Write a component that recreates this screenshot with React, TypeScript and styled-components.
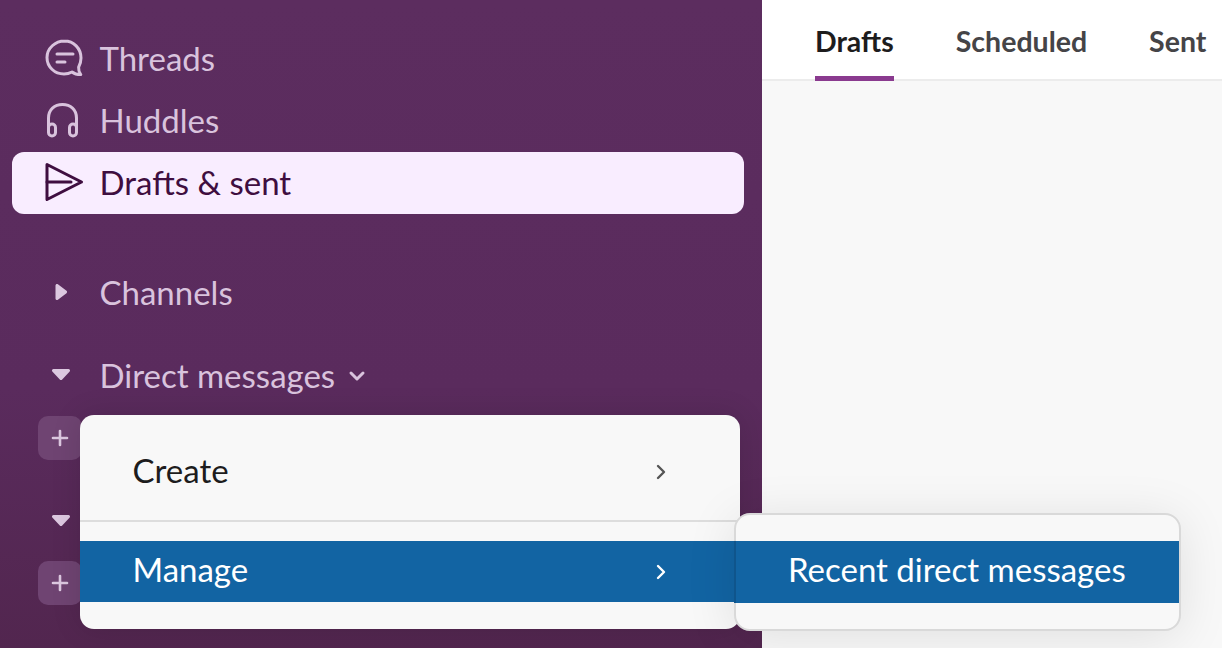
import React from "react";
import styled, { createGlobalStyle } from "styled-components";
import { ChevronDown, ChevronRight, Plus } from "lucide-react";

const GlobalStyle = createGlobalStyle`
  html, body {
    margin: 0;
    padding: 0;
    overflow: hidden;
  }
  * {
    box-sizing: border-box;
  }
  body {
    font-family: Lato, "Open Sans", sans-serif;
  }
`;

const Page = styled.div`
  position: relative;
  display: flex;
  width: 1222px;
  height: 648px;
  overflow: hidden;
`;

const Sidebar = styled.nav`
  display: flex;
  flex-direction: column;
  flex: 0 0 762px;
  padding-top: 28px;
  background: linear-gradient(180deg, #5c2d5f 0%, #5a2b5d 60%, #52264f 100%);
`;

const NavRow = styled.div<{ $active?: boolean }>`
  display: flex;
  align-items: center;
  gap: 15.5px;
  width: 732px;
  height: 62px;
  margin-left: 12px;
  padding: 0 0 2px 32px;
  border-radius: 12px;
  font-size: 33px;
  flex: none;
  color: ${({ $active }) => ($active ? "#3f0e40" : "#d9c3dd")};
  background: ${({ $active }) => ($active ? "#f9edff" : "transparent")};
`;

const NavIcon = styled.svg`
  width: 40px;
  height: 40px;
  flex: none;
  fill: none;
  stroke: currentColor;
  stroke-width: 3;
  stroke-linecap: round;
  stroke-linejoin: round;
`;

const SectionRow = styled(NavRow)<{ $gap: number }>`
  margin-top: ${({ $gap }) => $gap}px;
`;

const Caret = styled.svg`
  width: 40px;
  height: 40px;
  flex: none;
  fill: #dcc8e0;
`;

const SectionMenu = styled(ChevronDown)`
  margin-left: -6px;
  margin-top: 2px;
`;

const AddButton = styled.div<{ $gap: number }>`
  display: flex;
  align-items: center;
  justify-content: center;
  flex: none;
  width: 44px;
  height: 44px;
  margin: ${({ $gap }) => $gap}px 0 0 38px;
  border-radius: 10px;
  color: #dcc8e0;
  background: #6f4472;
`;

const Main = styled.main`
  display: flex;
  flex-direction: column;
  flex: 1;
  background: #f8f8f8;
`;

const TabBar = styled.div`
  display: flex;
  gap: 62px;
  flex: none;
  height: 81px;
  padding-left: 53px;
  background: #fff;
  border-bottom: 2px solid #ececec;
`;

const Tab = styled.div<{ $active?: boolean }>`
  height: 81px;
  padding-top: 22px;
  font-size: 28.5px;
  line-height: 38px;
  font-weight: 700;
  white-space: nowrap;
  color: ${({ $active }) => ($active ? "#1d1c1d" : "#454447")};
  border-bottom: 5px solid ${({ $active }) => ($active ? "#8a3a8f" : "transparent")};
`;

const Menu = styled.div`
  position: absolute;
  left: 80px;
  top: 415px;
  width: 660px;
  height: 214px;
  border-radius: 14px;
  background: #f8f8f8;
  box-shadow: 0 0 30px rgba(0, 0, 0, 0.12);
`;

const MenuItem = styled.div<{ $selected?: boolean }>`
  display: flex;
  align-items: center;
  justify-content: space-between;
  height: 61px;
  padding: 0 67px 0 52.500px;
  font-size: 33px;
  color: ${({ $selected }) => ($selected ? "#fff" : "#1d1c1d")};
  background: ${({ $selected }) => ($selected ? "#1264a3" : "transparent")};
`;

const CreateItem = styled(MenuItem)`
  height: 107px;
  padding-top: 8px;
  border-bottom: 2px solid #dddddd;
  margin-bottom: 19px;
`;

const ItemLabel = styled.span`
  margin-bottom: 6px;
`;

const CreateLabel = styled(ItemLabel)`
  margin-bottom: 3px;
`;

const SubMenu = styled.div`
  position: absolute;
  left: 734px;
  top: 513px;
  width: 447px;
  height: 118px;
  padding-top: 26px;
  border: 2px solid #d9d9d9;
  border-radius: 16px;
  background: #f8f8f8;
  box-shadow: 0 6px 50px rgba(0, 0, 0, 0.1);
`;

const SubMenuItem = styled.div`
  display: flex;
  align-items: center;
  height: 62px;
  margin-left: -2px;
  padding: 0 0 7px 54px;
  font-size: 33px;
  white-space: nowrap;
  color: #fff;
  background: #1264a3;
  box-shadow: inset 2px 0 0 rgba(0, 0, 0, 0.14);
`;

export default function App() {
  return (
    <Page>
      <GlobalStyle />
      <Sidebar>
        <NavRow>
          <NavIcon viewBox="0 0 40 40">
            <path d="M20.5 3C11.4 3 3 10.200 3 19.500S10.500 36 20 36c2.900 0 5.600-.7 8-2 2 1.600 5 2.600 8.800 2.600-1.700-2.200-2.400-4.600-2.200-7.400 1.500-2.700 2.400-6 2.400-9.200C37 10.200 29.600 3 20.500 3Z" />
            <path d="M13 16h16M13 24h8" />
          </NavIcon>
          Threads
        </NavRow>
        <NavRow>
          <NavIcon viewBox="0 0 40 40">
            <path d="M4.500 28V18C4.500 9.500 10.500 4.500 18.500 4.500S32.500 9.500 32.500 18v10" />
            <rect x="4.500" y="24" width="7" height="12" rx="3.500" />
            <rect x="25.500" y="24" width="7" height="12" rx="3.500" />
          </NavIcon>
          Huddles
        </NavRow>
        <NavRow $active>
          <NavIcon viewBox="0 0 40 40">
            <path d="M3 2.500 37.500 20 3 37.500Z" />
            <path d="M3 20h24" />
          </NavIcon>
          Drafts &amp; sent
        </NavRow>
        <SectionRow $gap={48}>
          <Caret viewBox="0 0 40 40">
            <path d="M11.500 13.500c0-1.300 1.400-2 2.400-1.200l8.600 6.500c.8.600.8 1.800 0 2.400l-8.600 6.500c-1 .8-2.400.1-2.400-1.200Z" />
          </Caret>
          Channels
        </SectionRow>
        <SectionRow $gap={21}>
          <Caret viewBox="0 0 40 40">
            <path d="M9.500 15h15c1.300 0 2 1.500 1.200 2.500l-7.500 8c-.6.700-1.800.7-2.400 0l-7.500-8c-.8-1-.1-2.500 1.200-2.500Z" transform="translate(0 -1)" />
          </Caret>
          Direct messages
          <SectionMenu size={24} strokeWidth={3} />
        </SectionRow>
        <AddButton $gap={9}>
          <Plus size={24} strokeWidth={2.6} />
        </AddButton>
        <SectionRow $gap={31}>
          <Caret viewBox="0 0 40 40">
            <path d="M9.500 15h15c1.300 0 2 1.500 1.200 2.500l-7.500 8c-.6.700-1.800.7-2.400 0l-7.500-8c-.8-1-.1-2.500 1.200-2.500Z" transform="translate(0 -1)" />
          </Caret>
        </SectionRow>
        <AddButton $gap={8}>
          <Plus size={24} strokeWidth={2.6} />
        </AddButton>
      </Sidebar>
      <Main>
        <TabBar>
          <Tab $active>Drafts</Tab>
          <Tab>Scheduled</Tab>
          <Tab>Sent</Tab>
        </TabBar>
      </Main>
      <Menu>
        <CreateItem>
          <CreateLabel>Create</CreateLabel>
          <ChevronRight size={24} strokeWidth={2.4} color="#555" />
        </CreateItem>
        <MenuItem $selected>
          <ItemLabel>Manage</ItemLabel>
          <ChevronRight size={24} strokeWidth={2.4} />
        </MenuItem>
      </Menu>
      <SubMenu>
        <SubMenuItem>Recent direct messages</SubMenuItem>
      </SubMenu>
    </Page>
  );
}
